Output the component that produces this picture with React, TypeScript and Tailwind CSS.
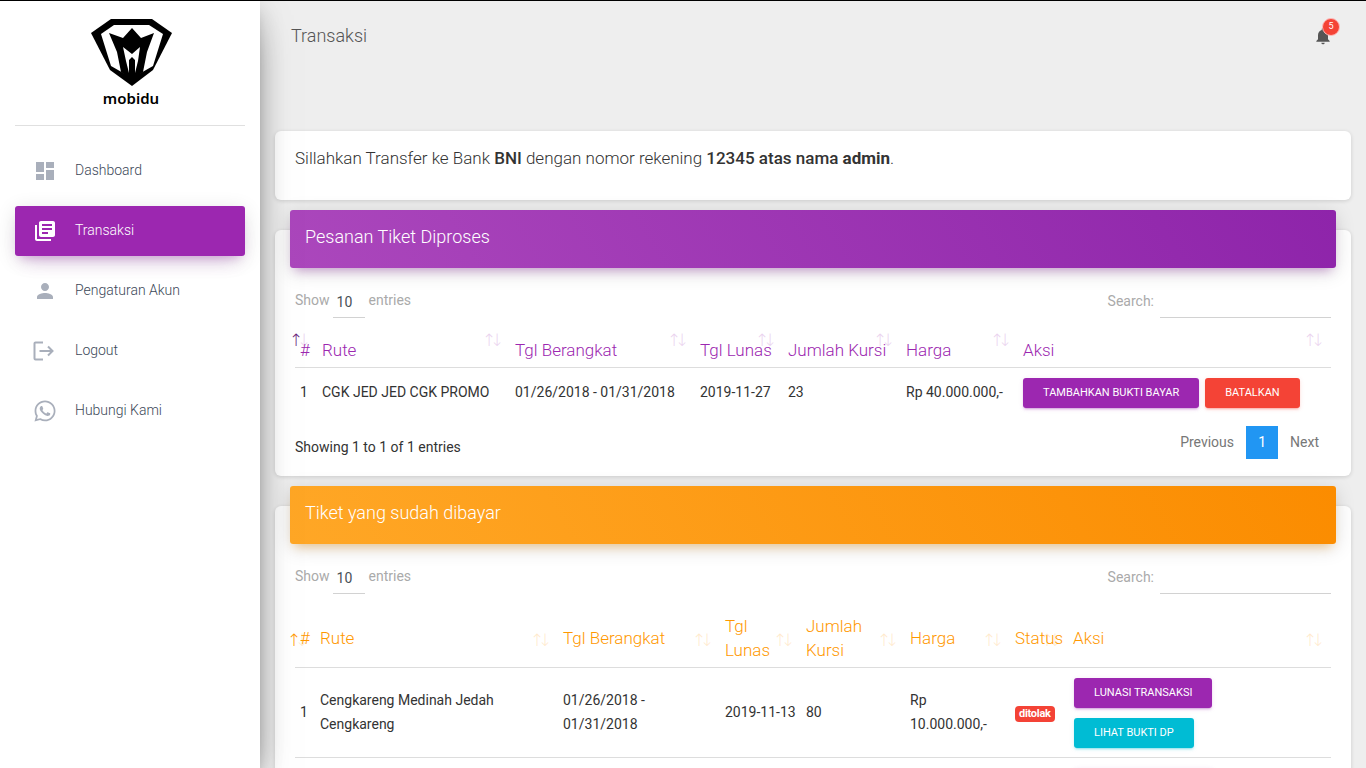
import React from 'react';
import { MdDashboard, MdLibraryBooks, MdPerson, MdNotifications } from 'react-icons/md';
import { FaWhatsapp } from 'react-icons/fa';

const LogoutIcon = () => (
  <svg width="22" height="20" viewBox="0 0 22 20" fill="none" stroke="currentColor" strokeWidth="2">
    <path d="M10 1.5H2.5a1 1 0 0 0-1 1v15a1 1 0 0 0 1 1H10" />
    <path d="M6.5 10h13M15 5.5l4.5 4.5-4.5 4.5" />
  </svg>
);

const Logo = () => (
  <svg width="82" height="68" viewBox="90 19 82 68">
    <path fill="#000" d="M111 19h41l20 14-19 37-21 16-22-16-19-37z" />
    <path fill="#fff" d="M114 25h35l14 9-10 32-21 12-21-12-10-32z" />
    <path fill="#000" d="M109 33l14 5 9-10 9 10 13-5-7 19-4 20-11 8-11-8-4-20z" />
    <path fill="#fff" d="M123 47l9 7 8-7-2 14-3 12v-13l-3-3-3 3v13l-3-12z" />
  </svg>
);

const menu = [
  { label: 'Dashboard', icon: <MdDashboard size={24} /> },
  { label: 'Transaksi', icon: <MdLibraryBooks size={24} />, active: true },
  { label: 'Pengaturan Akun', icon: <MdPerson size={24} /> },
  { label: 'Logout', icon: <LogoutIcon /> },
  { label: 'Hubungi Kami', icon: <FaWhatsapp size={24} /> },
];

const SortArrows = ({ active, activeClass }: { active?: boolean; activeClass?: string }) => (
  <>
    <span className={`absolute right-[14px] bottom-[15px] font-['DejaVu_Sans'] leading-6 ${active ? activeClass : 'opacity-20'}`}>↑</span>
    <span className="absolute right-[6px] bottom-[15px] font-['DejaVu_Sans'] leading-6 opacity-20">↓</span>
  </>
);

const Th = ({ children, className, active, activeClass }: { children: React.ReactNode; className: string; active?: boolean; activeClass?: string }) => (
  <th className={`relative p-[5px] text-left align-middle font-light text-[17px] leading-6 ${className}`}>
    {children}
    <SortArrows active={active} activeClass={activeClass} />
  </th>
);

const Btn = ({ children, className }: { children?: React.ReactNode; className: string }) => (
  <button className={`h-[30px] px-5 rounded-[3px] text-[11px] font-normal text-white uppercase ${className}`}>{children}</button>
);

const purpleBtn = 'bg-[#9c27b0] shadow-[0_2px_2px_0_rgba(156,39,176,0.14),0_3px_1px_-2px_rgba(156,39,176,0.2),0_1px_5px_0_rgba(156,39,176,0.12)]';
const redBtn = 'bg-[#f44336] shadow-[0_2px_2px_0_rgba(244,67,54,0.14),0_3px_1px_-2px_rgba(244,67,54,0.2),0_1px_5px_0_rgba(244,67,54,0.12)]';
const cyanBtn = 'bg-[#00bcd4] shadow-[0_2px_2px_0_rgba(0,188,212,0.14),0_3px_1px_-2px_rgba(0,188,212,0.2),0_1px_5px_0_rgba(0,188,212,0.12)]';

const TableControls = () => (
  <div className="flex justify-between h-[49px] -mt-[1px] text-sm text-[#aaa]">
    <div className="flex h-9 items-start">
      <span className="mt-[6px]">Show</span>
      <span className="ml-[3px] w-8 h-[34px] pl-1 pt-[8px] border-b border-[#d2d2d2] text-[#495057]">10</span>
      <span className="ml-[4px] mt-[6px]">entries</span>
    </div>
    <div className="flex h-9 items-start">
      <span className="mt-[7px]">Search:</span>
      <span className="ml-[6px] w-[171px] h-[34px] border-b border-[#d2d2d2]" />
    </div>
  </div>
);

const Card = ({ title, header, children }: { title: string; header: string; children: React.ReactNode }) => (
  <div className="mb-[30px] rounded-md bg-white shadow-[0_1px_4px_0_rgba(0,0,0,0.14)]">
    <div className={`mx-[15px] -translate-y-5 h-[58px] flex items-center px-[15px] pb-1 rounded-[3px] text-lg font-light text-white ${header}`}>
      {title}
    </div>
    <div className="-mt-[4px] px-5">{children}</div>
  </div>
);

export default function App() {
  return (
    <div className="h-screen overflow-hidden flex flex-col bg-[#eeeeee] font-['Roboto',sans-serif] text-[#333]">
      <div className="h-px shrink-0 bg-black" />
      <div className="flex flex-1 min-h-0">
        <aside className="relative z-10 w-[260px] shrink-0 bg-white shadow-[0_16px_38px_-12px_rgba(0,0,0,0.56),0_4px_25px_0_rgba(0,0,0,0.12),0_8px_10px_-5px_rgba(0,0,0,0.2)]">
          <div className="mx-[15px] h-[125px] border-b border-[#e0e0e0] flex flex-col items-center pt-[18px]">
            <span className="ml-[2px]"><Logo /></span>
            <span className="mt-[1px] ml-[2px] font-['Noto_Sans',sans-serif] font-semibold text-[15px] leading-5 text-black">mobidu</span>
          </div>
          <nav className="mt-[20px] mx-[15px] flex flex-col gap-[10px]">
            {menu.map((item) => (
              <a
                key={item.label}
                className={`h-[50px] flex items-center pl-[18px] rounded-[3px] text-sm font-light ${
                  item.active
                    ? 'bg-[#9c27b0] text-white shadow-[0_12px_20px_-10px_rgba(156,39,176,0.28),0_4px_20px_0_rgba(0,0,0,0.12),0_7px_8px_-5px_rgba(156,39,176,0.2)]'
                    : 'text-[#3c4858]'
                }`}
              >
                <span className={`w-[42px] flex items-center justify-start ${item.active ? 'text-white' : 'text-[#a9afbb]'}`}>{item.icon}</span>
                <span className="mb-[2px]">{item.label}</span>
              </a>
            ))}
          </nav>
        </aside>

        <main className="flex-1 min-w-0 px-[15px]">
          <header className="h-[130px] pl-4 pr-[5px] flex items-start justify-between">
            <h1 className="mt-[23px] text-lg leading-6 font-light text-[#555]">Transaksi</h1>
            <div className="relative mt-[25px] mr-[13px] text-[#555]">
              <MdNotifications size={20} />
              <span className="absolute -top-[8px] -right-[7px] w-[18px] h-[18px] rounded-full bg-[#f44336] border border-[#fbb] flex items-center justify-center text-[9px] text-white">5</span>
            </div>
          </header>

          <div className="mb-[30px] h-[69px] rounded-md bg-white px-5 pt-[15px] text-[17px] leading-6 text-[#333] font-light shadow-[0_1px_4px_0_rgba(0,0,0,0.14)]">
            Sillahkan Transfer ke Bank <b className="font-medium">BNI</b> dengan nomor rekening <b className="font-medium">12345 atas nama</b> <b className="font-bold">admin</b>.
          </div>

          <Card title="Pesanan Tiket Diproses" header="bg-[linear-gradient(60deg,#ab47bc,#8e24aa)] shadow-[0_4px_20px_0_rgba(0,0,0,0.14),0_7px_10px_-5px_rgba(156,39,176,0.4)]">
            <TableControls />
            <table className="w-full table-fixed border-collapse text-[#9c27b0]">
              <thead>
                <tr className="border-b border-[#ddd]">
                  <Th className="w-[22px]" active activeClass="text-[#6a1b7a]">#</Th>
                  <Th className="w-[193px]">Rute</Th>
                  <Th className="w-[185px]">Tgl Berangkat</Th>
                  <Th className="w-[88px] whitespace-nowrap">Tgl Lunas</Th>
                  <Th className="w-[118px] whitespace-nowrap">Jumlah Kursi</Th>
                  <Th className="w-[117px]">Harga</Th>
                  <Th className="w-[313px]">Aksi</Th>
                </tr>
              </thead>
              <tbody className="text-sm leading-6 text-[#333]">
                <tr className="h-[50px]">
                  <td className="pl-[5px] pr-[5px] pb-[2px]">1</td>
                  <td className="pl-[5px] pr-[5px] pb-[2px]">CGK JED JED CGK PROMO</td>
                  <td className="pl-[5px] pr-[5px] pb-[2px]">01/26/2018 - 01/31/2018</td>
                  <td className="pl-[5px] pr-[5px] pb-[2px]">2019-11-27</td>
                  <td className="pl-[5px] pr-[5px] pb-[2px]">23</td>
                  <td className="pl-[5px] pr-[5px] pb-[2px]">Rp 40.000.000,-</td>
                  <td className="px-[5px]">
                    <div className="flex gap-[6px]">
                      <Btn className={purpleBtn}>Tambahkan Bukti Bayar</Btn>
                      <Btn className={redBtn}>Batalkan</Btn>
                    </div>
                  </td>
                </tr>
              </tbody>
            </table>
            <div className="flex justify-between pt-[8px] h-[58px] text-sm">
              <span className="mt-[9px] leading-6">Showing 1 to 1 of 1 entries</span>
              <div className="flex h-[33px] items-center text-[#777]">
                <span className="mr-3">Previous</span>
                <span className="w-8 h-[33px] flex items-center justify-center bg-[#2196f3] text-white">1</span>
                <span className="mx-3">Next</span>
              </div>
            </div>
          </Card>

          <Card title="Tiket yang sudah dibayar" header="bg-[linear-gradient(60deg,#ffa726,#fb8c00)] shadow-[0_4px_20px_0_rgba(0,0,0,0.14),0_7px_10px_-5px_rgba(255,152,0,0.4)]">
            <TableControls />
            <table className="w-full table-fixed border-collapse text-[#ff9800]">
              <thead>
                <tr className="border-b border-[#ddd]">
                  <Th className="w-[20px]" active activeClass="text-[#ff9800]">#</Th>
                  <Th className="w-[243px]">Rute</Th>
                  <Th className="w-[162px]">Tgl Berangkat</Th>
                  <Th className="w-[81px]">Tgl Lunas</Th>
                  <Th className="w-[104px]">Jumlah Kursi</Th>
                  <Th className="w-[105px]">Harga</Th>
                  <Th className="w-[58px] whitespace-nowrap">Status</Th>
                  <Th className="w-[263px]">Aksi</Th>
                </tr>
              </thead>
              <tbody className="text-sm leading-6 text-[#333]">
                <tr className="h-[90px] border-b border-[#ddd]">
                  <td className="px-[5px]">1</td>
                  <td className="px-[5px]">Cengkareng Medinah Jedah Cengkareng</td>
                  <td className="px-[5px]">01/26/2018 - 01/31/2018</td>
                  <td className="px-[5px]">2019-11-13</td>
                  <td className="px-[5px]">80</td>
                  <td className="px-[5px]">Rp 10.000.000,-</td>
                  <td className="px-[5px]">
                    <span className="inline-flex h-4 px-1 items-center rounded-[4px] bg-[#f44336] text-[11px] font-bold tracking-tight text-white">ditolak</span>
                  </td>
                  <td className="px-[5px]">
                    <div className="ml-px mt-[1px] flex flex-col items-start gap-[10px]">
                      <Btn className={purpleBtn}>Lunasi Transaksi</Btn>
                      <Btn className={cyanBtn}>Lihat Bukti DP</Btn>
                    </div>
                  </td>
                </tr>
                <tr className="h-[90px]">
                  <td colSpan={7} />
                  <td className="px-[5px] pt-[10px] align-top">
                    <div className="ml-px flex flex-col items-start">
                      <Btn className={`w-[139px] ${purpleBtn}`} />
                    </div>
                  </td>
                </tr>
              </tbody>
            </table>
          </Card>
        </main>
      </div>
    </div>
  );
}
